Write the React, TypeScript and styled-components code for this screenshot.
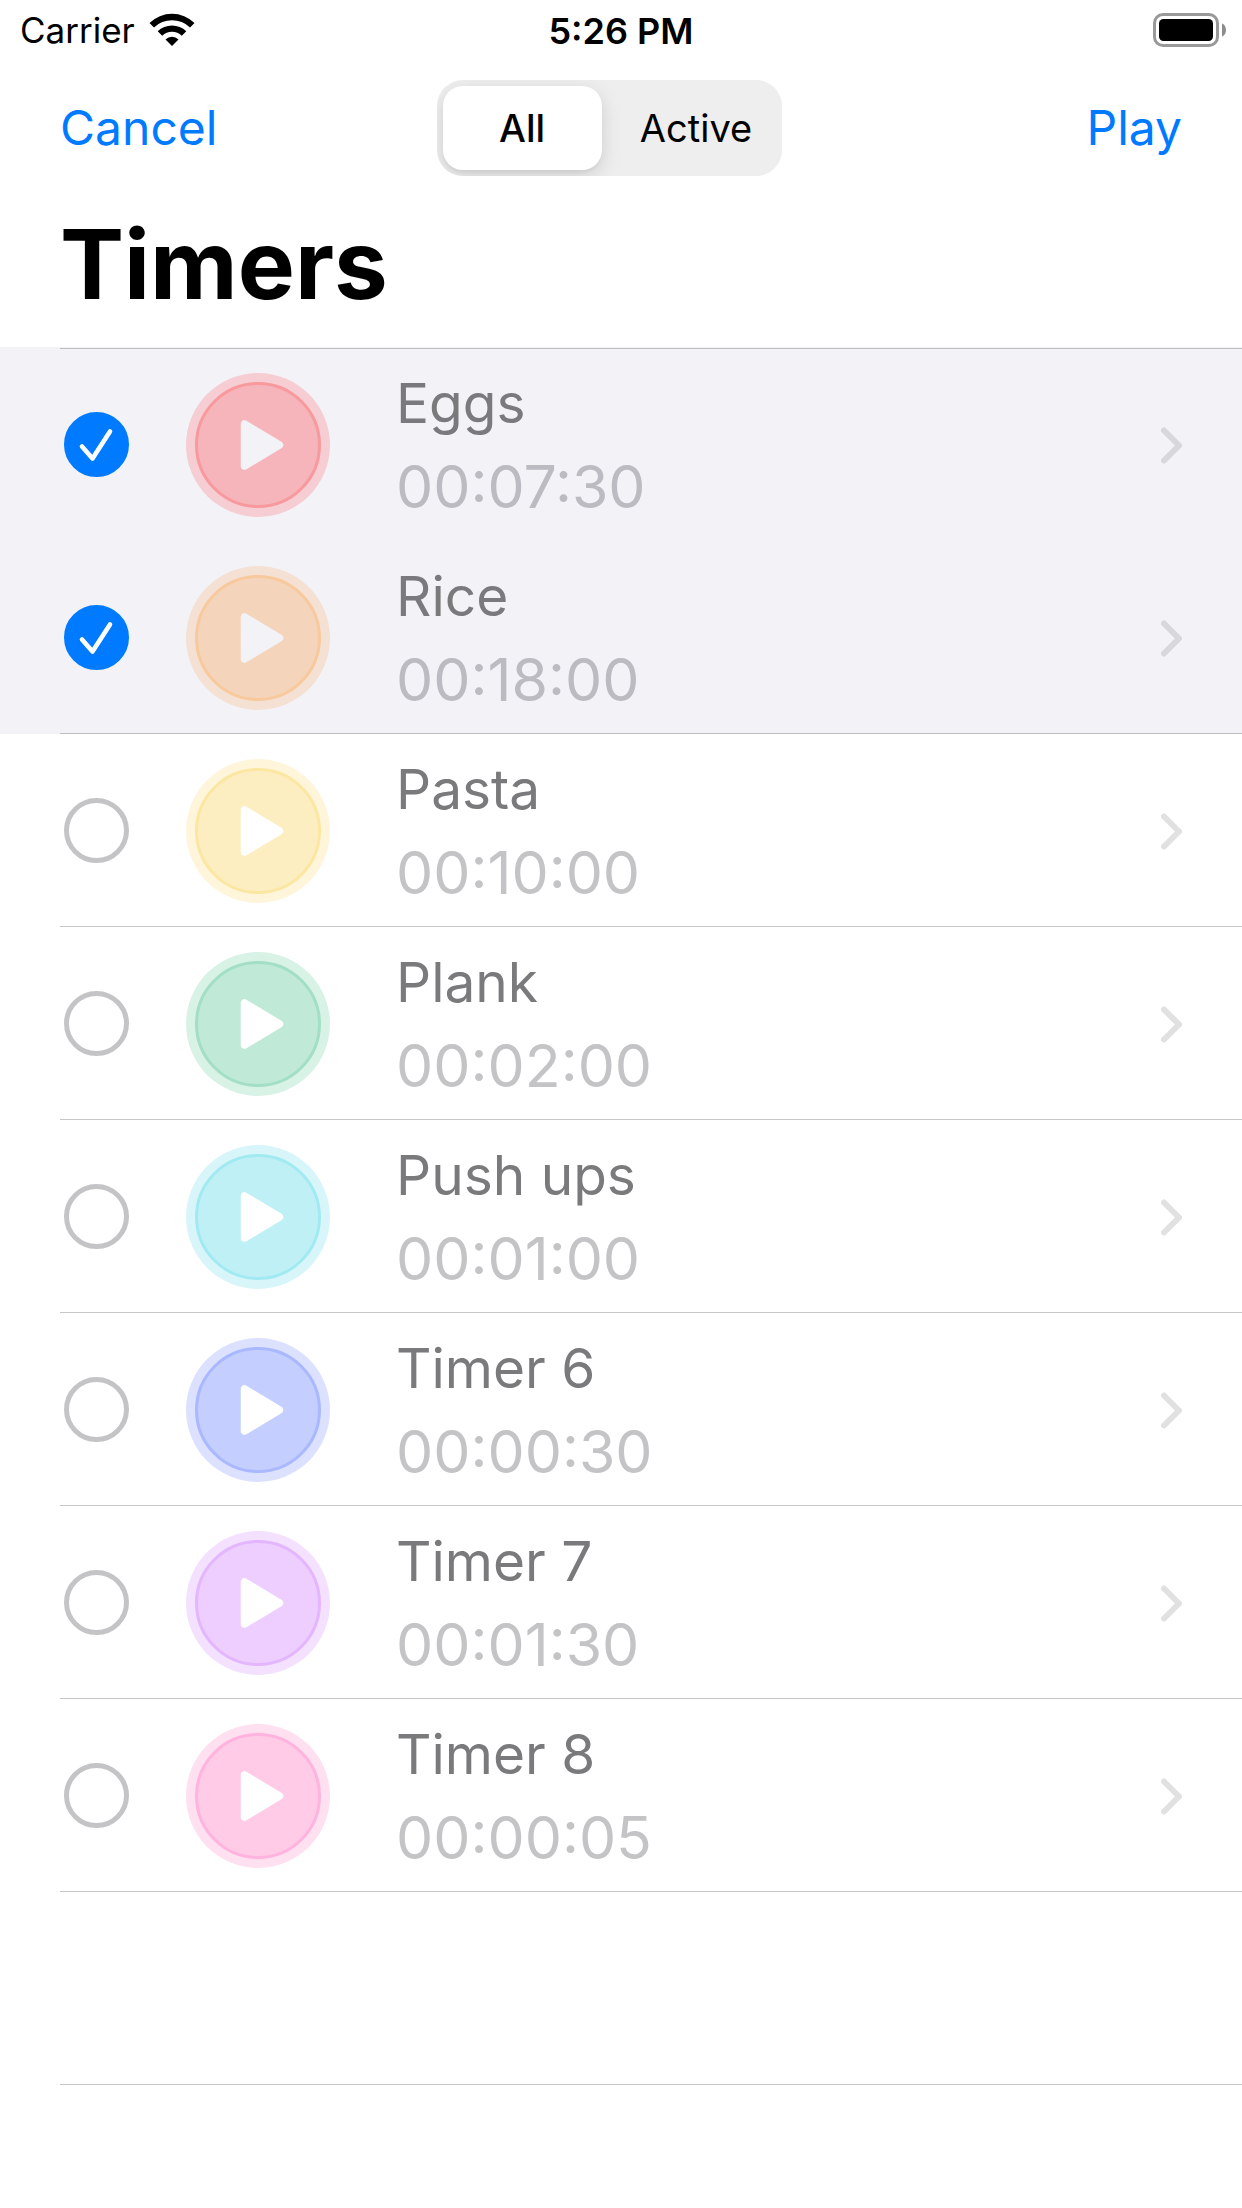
import React, { useState } from "react";
import styled, { createGlobalStyle } from "styled-components";

const GlobalStyle = createGlobalStyle`
  *, *::before, *::after { box-sizing: border-box; }
  body {
    margin: 0;
    background: #ffffff;
    color: #000000;
    font-family: Inter, "Liberation Sans", sans-serif;
  }
  button {
    margin: 0;
    padding: 0;
    border: 0;
    background: none;
    color: inherit;
    font: inherit;
    cursor: pointer;
  }
`;

const separator = "rgba(60, 60, 67, 0.29)";

const StatusBar = styled.div`
  display: grid;
  grid-template-columns: 1fr auto 1fr;
  align-items: center;
  height: 60px;
  padding: 0 16px;
  line-height: 44px;
`;

const Carrier = styled.div`
  display: flex;
  align-items: center;
  gap: 14px;
  padding-left: 4px;
  font-size: 35px;
`;

const Clock = styled.time`
  padding-top: 2px;
  font-size: 36px;
  font-weight: 600;
`;

const Battery = styled.svg`
  justify-self: end;
`;

const NavBar = styled.nav`
  display: grid;
  grid-template-columns: 1fr auto 1fr;
  align-items: center;
  padding: 20px 60px 0;
`;

const NavButton = styled.button<{ $end?: boolean }>`
  justify-self: ${(p) => (p.$end ? "end" : "start")};
  color: #007aff;
  font-size: 48px;
  line-height: 60px;
`;

const Segments = styled.div`
  display: grid;
  grid-template-columns: 159px 159px;
  gap: 15px;
  height: 96px;
  margin-right: 24px;
  padding: 6px;
  overflow: hidden;
  border-radius: 26px;
  background: #eeeeef;
`;

const Segment = styled.button<{ $on: boolean }>`
  border-radius: 20px;
  background: ${(p) => (p.$on ? "#ffffff" : "transparent")};
  box-shadow: ${(p) => (p.$on ? "0 6px 20px rgba(0, 0, 0, 0.13), 0 3px 3px rgba(0, 0, 0, 0.04)" : "none")};
  font-size: 38px;
  font-weight: ${(p) => (p.$on ? 500 : 400)};
  line-height: 48px;
`;

const Title = styled.h1`
  margin: 0;
  padding: 28px 60px 23px;
  font-size: 96px;
  font-weight: 700;
  line-height: 120px;
`;

const List = styled.ul`
  margin: 0;
  padding: 0;
  list-style: none;
`;

const Row = styled.li<{ $selected?: boolean }>`
  padding-left: 60px;
  background: ${(p) => (p.$selected ? "#f2f2f7" : "#ffffff")};

  &:first-child {
    padding-top: 1px;
  }
`;

const RowBody = styled.div<{ $top?: boolean; $bottom?: boolean }>`
  display: flex;
  align-items: center;
  min-height: 193px;
  padding: 18px 60px 17px 4px;
  border-top: 1px solid ${(p) => (p.$top ? separator : "transparent")};
  border-bottom: 1px solid ${(p) => (p.$bottom ? separator : "transparent")};
`;

const Check = styled.span`
  display: grid;
  flex: none;
  width: 65px;
  height: 65px;
  margin-bottom: 1px;

  > * {
    grid-area: 1 / 1;
  }

  svg {
    pointer-events: none;
  }
`;

const CheckInput = styled.input`
  width: 65px;
  height: 65px;
  margin: 0;
  appearance: none;
  border: 5px solid #c4c4c6;
  border-radius: 50%;
  cursor: pointer;

  &:checked {
    border-color: #007aff;
    background: #007aff;
  }
`;

const PlayRing = styled.button<{ $halo: string }>`
  flex: none;
  width: 144px;
  height: 144px;
  margin: 0 66px 0 57px;
  padding: 9px;
  border-radius: 50%;
  background: ${(p) => p.$halo};
`;

const PlayDisc = styled.span<{ $fill: string; $edge: string }>`
  display: grid;
  place-items: center;
  width: 126px;
  height: 126px;
  border: 3px solid ${(p) => p.$edge};
  border-radius: 50%;
  background: ${(p) => p.$fill};
`;

const Texts = styled.div`
  display: flex;
  flex: 1;
  flex-direction: column;
  gap: 12px;
  line-height: 72px;
`;

const Name = styled.label`
  color: #7a7a7c;
  font-size: 55px;
`;

const Duration = styled.span<{ $selected: boolean }>`
  color: ${(p) => (p.$selected ? "#bcbbc1" : "#c4c4c6")};
  font-size: 59px;
`;

const Disclosure = styled.button<{ $selected: boolean }>`
  display: flex;
  color: ${(p) => (p.$selected ? "#d8d8dc" : "#e1e1e2")};
`;

type Timer = { name: string; time: string; halo: string; fill: string; edge: string };

const timers: Timer[] = [
  { name: "Eggs", time: "00:07:30", halo: "#f5cdd3", fill: "#f6b5ba", edge: "#f8999d" },
  { name: "Rice", time: "00:18:00", halo: "#f4e1d4", fill: "#f4d4ba", edge: "#f8c99c" },
  { name: "Pasta", time: "00:10:00", halo: "#fef5da", fill: "#fdeec2", edge: "#fbe7a2" },
  { name: "Plank", time: "00:02:00", halo: "#d8f2e6", fill: "#c0e9d7", edge: "#a3dfc5" },
  { name: "Push ups", time: "00:01:00", halo: "#d8f6fa", fill: "#bff0f5", edge: "#a2eaf2" },
  { name: "Timer 6", time: "00:00:30", halo: "#dce1ff", fill: "#c4ceff", edge: "#a9b8ff" },
  { name: "Timer 7", time: "00:01:30", halo: "#f3e1ff", fill: "#edceff", edge: "#e3b6ff" },
  { name: "Timer 8", time: "00:00:05", halo: "#ffe0f1", fill: "#ffcbe7", edge: "#ffb3de" },
];

const WifiIcon = () => (
  <svg width="46" height="34" viewBox="0 0 46 34" aria-hidden="true">
    <path d="M0.5 10A32 32 0 0 1 45.5 10L41 14.5A25.7 25.7 0 0 0 5 14.5Z" />
    <path d="M8.7 18.3A20.3 20.3 0 0 1 37.3 18.3L32.8 22.8A13.9 13.9 0 0 0 13.2 22.8Z" />
    <path d="M16.5 26.5A9.2 9.2 0 0 1 29.5 26.5L23 33Z" />
  </svg>
);

const BatteryIcon = () => (
  <Battery width="73" height="34" viewBox="0 0 73 34" role="img" aria-label="Battery full">
    <rect x="1.5" y="1.5" width="63" height="31" rx="8.5" fill="none" stroke="#999999" strokeWidth="3" />
    <rect x="6" y="6" width="54" height="22" rx="4.5" />
    <path d="M69 10.5C74.3 12.5 74.3 21.5 69 23.5Z" fill="#8c8c8c" />
  </Battery>
);

const CheckMark = () => (
  <svg width="65" height="65" viewBox="0 0 65 65" fill="none" aria-hidden="true">
    <path d="M18 34.5L28.5 46.5L46 19.5" stroke="#ffffff" strokeWidth="4.6" strokeLinecap="round" strokeLinejoin="round" />
  </svg>
);

const PlayIcon = ({ color }: { color: string }) => (
  <svg width="120" height="120" viewBox="0 0 120 120" aria-hidden="true">
    <path
      d="M46.5 39V81L81.5 60Z"
      fill={color}
      stroke={color}
      strokeWidth="7.5"
      strokeLinejoin="round"
    />
  </svg>
);

const ChevronIcon = () => (
  <svg width="21" height="37" viewBox="0 0 21 37" fill="none" aria-hidden="true">
    <path d="M3 3.5L18 18.5L3 33.5" stroke="currentColor" strokeWidth="6" strokeLinecap="round" strokeLinejoin="round" />
  </svg>
);

export default function App() {
  const [filter, setFilter] = useState("All");
  const [selected, setSelected] = useState(["Eggs", "Rice"]);

  const toggle = (name: string) =>
    setSelected((now) => (now.includes(name) ? now.filter((n) => n !== name) : [...now, name]));

  return (
    <>
      <GlobalStyle />
      <StatusBar>
        <Carrier>
          Carrier
          <WifiIcon />
        </Carrier>
        <Clock>5:26 PM</Clock>
        <BatteryIcon />
      </StatusBar>
      <NavBar>
        <NavButton type="button">Cancel</NavButton>
        <Segments role="group" aria-label="Filter">
          {["All", "Active"].map((label) => (
            <Segment
              key={label}
              type="button"
              $on={filter === label}
              aria-pressed={filter === label}
              onClick={() => setFilter(label)}
            >
              {label}
            </Segment>
          ))}
        </Segments>
        <NavButton type="button" $end>
          Play
        </NavButton>
      </NavBar>
      <main>
        <Title>Timers</Title>
        <List>
          {timers.map((timer, i) => {
            const on = selected.includes(timer.name);
            const next = timers[i + 1];
            const joined = on && next !== undefined && selected.includes(next.name);
            const id = `timer-${i}`;
            return (
              <Row key={timer.name} $selected={on}>
                <RowBody $top={i === 0} $bottom={!joined}>
                  <Check>
                    <CheckInput id={id} type="checkbox" checked={on} onChange={() => toggle(timer.name)} />
                    {on && <CheckMark />}
                  </Check>
                  <PlayRing type="button" $halo={timer.halo} aria-label={`Start ${timer.name}`}>
                    <PlayDisc $fill={timer.fill} $edge={timer.edge}>
                      <PlayIcon color={on ? "#f2f2f7" : "#ffffff"} />
                    </PlayDisc>
                  </PlayRing>
                  <Texts>
                    <Name htmlFor={id}>{timer.name}</Name>
                    <Duration $selected={on}>{timer.time}</Duration>
                  </Texts>
                  <Disclosure type="button" $selected={on} aria-label={`Edit ${timer.name}`}>
                    <ChevronIcon />
                  </Disclosure>
                </RowBody>
              </Row>
            );
          })}
          <Row aria-hidden="true">
            <RowBody $bottom />
          </Row>
        </List>
      </main>
    </>
  );
}
